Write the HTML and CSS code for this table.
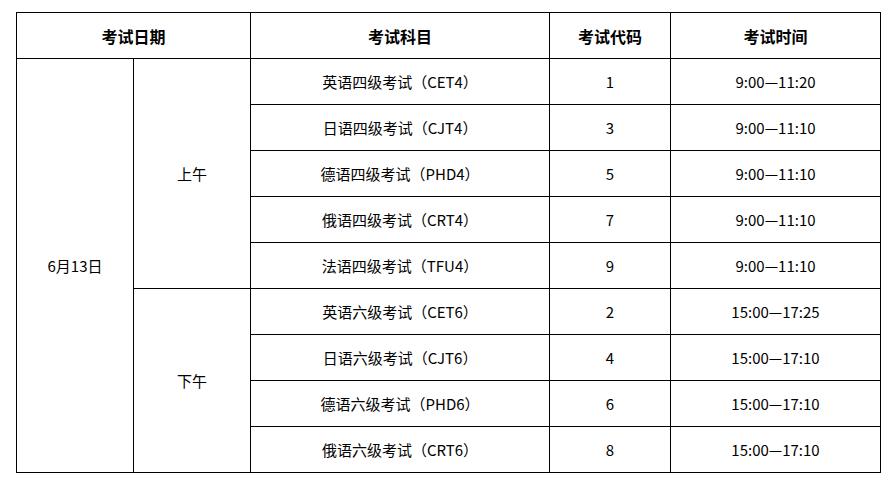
FILE: index.html
```html
<!DOCTYPE html>
<html lang="zh">
<head>
<meta charset="utf-8">
<link rel="stylesheet" href="styles.css">
</head>
<body>
<table class="schedule">
  <colgroup>
    <col class="c-date">
    <col class="c-half">
    <col class="c-subject">
    <col class="c-code">
    <col class="c-time">
  </colgroup>
  <thead>
    <tr>
      <th colspan="2">考试日期</th>
      <th>考试科目</th>
      <th>考试代码</th>
      <th>考试时间</th>
    </tr>
  </thead>
  <tbody>
    <tr>
      <td rowspan="9">6月13日</td>
      <td rowspan="5">上午</td>
      <td>英语四级考试（CET4）</td>
      <td>1</td>
      <td>9:00—11:20</td>
    </tr>
    <tr><td>日语四级考试（CJT4）</td><td>3</td><td>9:00—11:10</td></tr>
    <tr><td>德语四级考试（PHD4）</td><td>5</td><td>9:00—11:10</td></tr>
    <tr><td>俄语四级考试（CRT4）</td><td>7</td><td>9:00—11:10</td></tr>
    <tr><td>法语四级考试（TFU4）</td><td>9</td><td>9:00—11:10</td></tr>
    <tr>
      <td rowspan="4">下午</td>
      <td>英语六级考试（CET6）</td>
      <td>2</td>
      <td>15:00—17:25</td>
    </tr>
    <tr><td>日语六级考试（CJT6）</td><td>4</td><td>15:00—17:10</td></tr>
    <tr><td>德语六级考试（PHD6）</td><td>6</td><td>15:00—17:10</td></tr>
    <tr><td>俄语六级考试（CRT6）</td><td>8</td><td>15:00—17:10</td></tr>
  </tbody>
</table>
</body>
</html>
```
FILE: styles.css
```css
html, body {
  margin: 0;
  padding: 0;
  background: #ffffff;
}
body {
  padding: 12px 16px 0 16px;
  font-family: "Noto Sans CJK SC", "Noto Sans", sans-serif;
  color: #000000;
}
.schedule {
  border-collapse: collapse;
  table-layout: fixed;
  width: 864px;
}
.c-date { width: 117px; }
.c-half { width: 117px; }
.c-subject { width: 299px; }
.c-code { width: 121px; }
.c-time { width: 210px; }
.schedule th,
.schedule td {
  border: 1px solid #000000;
  padding: 0;
  text-align: center;
  vertical-align: middle;
  height: 45px;
  line-height: 20px;
}
.schedule th {
  font-size: 16px;
  font-weight: bold;
}
.schedule td {
  font-size: 15px;
  font-weight: normal;
}
```
